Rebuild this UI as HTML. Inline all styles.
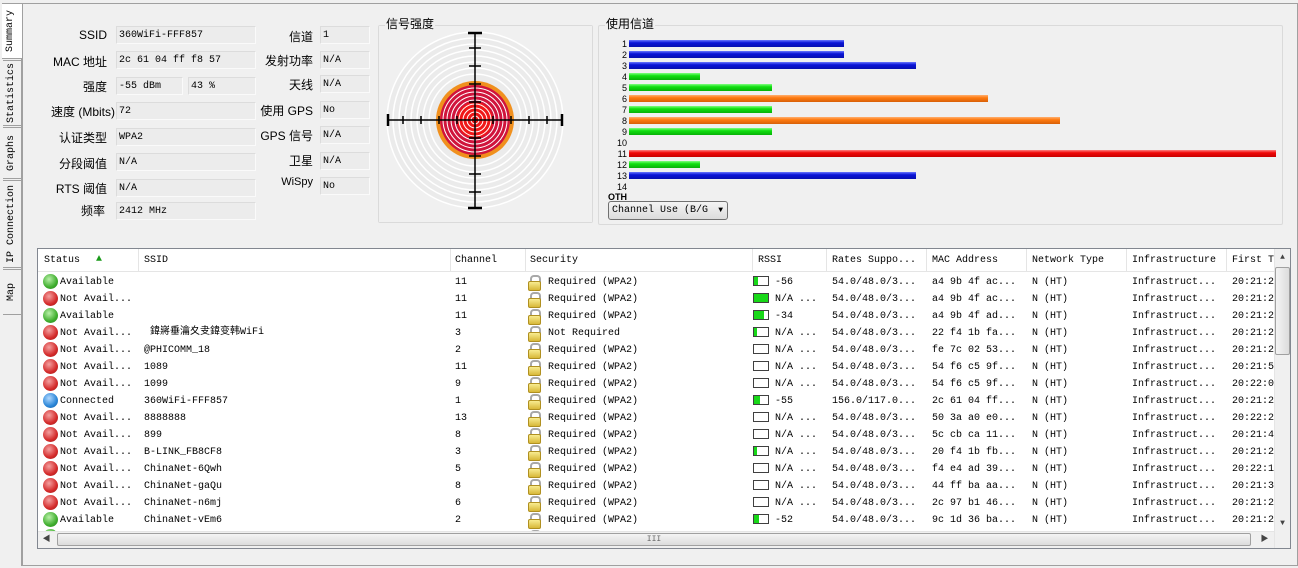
<!DOCTYPE html>
<html><head><meta charset="utf-8"><style>
*{margin:0;padding:0;box-sizing:border-box}
body{width:1298px;height:568px;background:#f0f0f0;font-family:"Liberation Mono","Noto Sans CJK SC",monospace;font-size:10px;color:#000;position:relative;overflow:hidden}
.a{position:absolute}
.frame{left:22px;top:3px;width:1276px;height:563px;border:1px solid #a0a0a0;border-left:1px solid #a0a0a0}
.tab{position:absolute;left:3px;width:19px;border:1px solid #a0a0a0;border-right:none;background:#f0f0f0;writing-mode:vertical-rl;transform:rotate(180deg);text-align:center;font-size:10px;line-height:17px}
.lbl{position:absolute;text-align:right;font-family:"Liberation Sans","Noto Sans CJK SC",sans-serif;font-size:12px;white-space:nowrap}
.fld{position:absolute;height:18px;background:#ececec;border:1px solid #dcdcdc;border-bottom-color:#fafafa;border-right-color:#fafafa;padding-left:2px;padding-top:2px;line-height:14px;font-size:10px;white-space:nowrap}
.grp{position:absolute;border:1px solid #dadada;border-radius:2px}
.gt{position:absolute;z-index:5;font-family:"Liberation Sans","Noto Sans CJK SC",sans-serif;font-size:12px;background:#f0f0f0;padding:0 1px;line-height:16px}
.bar{position:absolute;left:629px;height:7px}
.cn{position:absolute;width:30px;left:597px;text-align:right;font-family:"Liberation Sans",sans-serif;font-size:9px;line-height:10px}
.tbl{left:37px;top:248px;width:1254px;height:301px;border:1px solid #828790;background:#fff;overflow:hidden}
.hd{position:absolute;top:0;left:0;width:1236px;height:23px;background:#fff;border-bottom:1px solid #e5e5e5}
.hd span{position:absolute;top:6px;white-space:nowrap}
.sep{position:absolute;top:0;width:1px;height:22px;background:#e5e5e5}
.r{position:absolute;left:0;height:17px;width:1236px;white-space:nowrap}
.r span{position:absolute;top:4px;line-height:11px}
.dot{position:absolute;left:5px;top:1px;width:15px;height:15px;border-radius:50%}
.g{background:radial-gradient(circle at 40% 35%,#b8f0a8,#3fae2e 60%,#2a7e20)}
.rd{background:radial-gradient(circle at 40% 35%,#f4a0a0,#d42a2a 60%,#9a1a1a)}
.bl{background:radial-gradient(circle at 40% 35%,#b0d8ff,#2a86d8 60%,#1a5a9a)}
.lk{position:absolute;left:490px;top:2px;width:11px;height:14px}
.lk:before{content:"";position:absolute;left:2px;top:0;width:7px;height:7px;border:2px solid #a8a8a8;border-bottom:none;border-radius:4px 4px 0 0}
.lk:after{content:"";position:absolute;left:0;top:6px;width:11px;height:8px;background:linear-gradient(#f8ec90,#d8b838);border:1px solid #b09020;border-radius:2px}
.rs{position:absolute;left:715px;top:3px;width:16px;height:10px;border:1px solid #404040;background:#fff}
.rs i{display:block;height:100%;background:#18d818}
</style></head><body>
<div class="a frame"></div>
<div class="a" style="left:21px;top:3px;width:1px;height:563px;background:#a0a0a0"></div>
<div class="tab" style="top:3px;height:56px;background:#fff;left:2px;width:21px;border-right:none">Summary</div>
<div class="tab" style="top:60px;height:66px">Statistics</div>
<div class="tab" style="top:127px;height:52px">Graphs</div>
<div class="tab" style="top:180px;height:88px">IP Connection</div>
<div class="tab" style="top:269px;height:46px">Map</div>

<div class="lbl" style="right:1191px;top:28px">SSID</div>
<div class="lbl" style="right:1191px;top:53px">MAC 地址</div>
<div class="lbl" style="right:1191px;top:78px">强度</div>
<div class="lbl" style="right:1183px;top:103px">速度 (Mbits)</div>
<div class="lbl" style="right:1191px;top:129px">认证类型</div>
<div class="lbl" style="right:1191px;top:155px">分段阈值</div>
<div class="lbl" style="right:1191px;top:180px">RTS 阈值</div>
<div class="lbl" style="right:1193px;top:202px">频率</div>
<div class="fld" style="left:116px;top:26px;width:140px">360WiFi-FFF857</div>
<div class="fld" style="left:116px;top:51px;width:140px">2c 61 04 ff f8 57</div>
<div class="fld" style="left:116px;top:77px;width:67px">-55 dBm</div>
<div class="fld" style="left:188px;top:77px;width:68px">43 %</div>
<div class="fld" style="left:116px;top:102px;width:140px">72</div>
<div class="fld" style="left:116px;top:128px;width:140px">WPA2</div>
<div class="fld" style="left:116px;top:153px;width:140px">N/A</div>
<div class="fld" style="left:116px;top:179px;width:140px">N/A</div>
<div class="fld" style="left:116px;top:202px;width:140px">2412 MHz</div>

<div class="lbl" style="right:985px;top:28px">信道</div>
<div class="lbl" style="right:985px;top:52px">发射功率</div>
<div class="lbl" style="right:985px;top:76px">天线</div>
<div class="lbl" style="right:985px;top:102px">使用 GPS</div>
<div class="lbl" style="right:985px;top:127px">GPS 信号</div>
<div class="lbl" style="right:985px;top:152px">卫星</div>
<div class="lbl" style="right:985px;top:176px;font-size:11px">WiSpy</div>
<div class="fld" style="left:320px;top:26px;width:50px">1</div>
<div class="fld" style="left:320px;top:51px;width:50px">N/A</div>
<div class="fld" style="left:320px;top:75px;width:50px">N/A</div>
<div class="fld" style="left:320px;top:101px;width:50px">No</div>
<div class="fld" style="left:320px;top:126px;width:50px">N/A</div>
<div class="fld" style="left:320px;top:152px;width:50px">N/A</div>
<div class="fld" style="left:320px;top:177px;width:50px">No</div>

<div class="grp" style="left:378px;top:25px;width:215px;height:198px"></div>
<svg class="a" style="left:378px;top:25px" width="215" height="198">
<rect x="1" y="1" width="213" height="196" fill="#f0f0f0"/>
<g fill="none" stroke="#fff" stroke-width="1.5">
<circle cx="97" cy="95" r="88" fill="#ebebeb"/>
<circle cx="97" cy="95" r="82"/><circle cx="97" cy="95" r="76"/><circle cx="97" cy="95" r="70"/><circle cx="97" cy="95" r="64"/><circle cx="97" cy="95" r="58"/><circle cx="97" cy="95" r="52"/><circle cx="97" cy="95" r="46"/>
</g>
<circle cx="97" cy="95" r="39" fill="#f0901e"/>
<circle cx="97" cy="95" r="35" fill="#d0143c"/>
<circle cx="97" cy="95" r="18" fill="#f01818"/>
<g fill="none" stroke="#fff" stroke-width="1">
<circle cx="97" cy="95" r="32"/><circle cx="97" cy="95" r="28"/><circle cx="97" cy="95" r="24"/><circle cx="97" cy="95" r="20"/><circle cx="97" cy="95" r="16"/><circle cx="97" cy="95" r="12"/><circle cx="97" cy="95" r="8"/><circle cx="97" cy="95" r="4"/>
</g>
<g stroke="#000" stroke-width="1.5">
<line x1="9" y1="95" x2="185" y2="95"/><line x1="97" y1="7" x2="97" y2="184"/>
<line x1="10" y1="89" x2="10" y2="101" stroke-width="2.5"/><line x1="184" y1="89" x2="184" y2="101" stroke-width="2.5"/>
<line x1="90" y1="8" x2="104" y2="8" stroke-width="2.5"/><line x1="90" y1="183" x2="104" y2="183" stroke-width="2.5"/>
<line x1="25" y1="91" x2="25" y2="99"/><line x1="43" y1="91" x2="43" y2="99"/><line x1="61" y1="91" x2="61" y2="99"/><line x1="79" y1="91" x2="79" y2="99"/>
<line x1="115" y1="91" x2="115" y2="99"/><line x1="133" y1="91" x2="133" y2="99"/><line x1="151" y1="91" x2="151" y2="99"/><line x1="169" y1="91" x2="169" y2="99"/>
<line x1="91" y1="23" x2="103" y2="23"/><line x1="91" y1="41" x2="103" y2="41"/><line x1="91" y1="59" x2="103" y2="59"/><line x1="91" y1="77" x2="103" y2="77"/>
<line x1="91" y1="113" x2="103" y2="113"/><line x1="91" y1="131" x2="103" y2="131"/><line x1="91" y1="149" x2="103" y2="149"/><line x1="91" y1="167" x2="103" y2="167"/>
</g>
</svg>
<div class="gt" style="left:385px;top:16px">信号强度</div>

<div class="grp" style="left:598px;top:25px;width:685px;height:200px"></div>
<div class="gt" style="left:605px;top:16px">使用信道</div>
<div class="cn" style="top:39px">1</div><div class="bar" style="top:40px;width:215px;background:linear-gradient(#6a78ff,#0a14d8 40%,#0810b0)"></div>
<div class="cn" style="top:50px">2</div><div class="bar" style="top:51px;width:215px;background:linear-gradient(#6a78ff,#0a14d8 40%,#0810b0)"></div>
<div class="cn" style="top:61px">3</div><div class="bar" style="top:62px;width:287px;background:linear-gradient(#6a78ff,#0a14d8 40%,#0810b0)"></div>
<div class="cn" style="top:72px">4</div><div class="bar" style="top:73px;width:71px;background:linear-gradient(#80ff80,#10e010 40%,#08b008)"></div>
<div class="cn" style="top:83px">5</div><div class="bar" style="top:84px;width:143px;background:linear-gradient(#80ff80,#10e010 40%,#08b008)"></div>
<div class="cn" style="top:94px">6</div><div class="bar" style="top:95px;width:359px;background:linear-gradient(#ffb070,#ff7a10 40%,#d86008)"></div>
<div class="cn" style="top:105px">7</div><div class="bar" style="top:106px;width:143px;background:linear-gradient(#80ff80,#10e010 40%,#08b008)"></div>
<div class="cn" style="top:116px">8</div><div class="bar" style="top:117px;width:431px;background:linear-gradient(#ffb070,#ff7a10 40%,#d86008)"></div>
<div class="cn" style="top:127px">9</div><div class="bar" style="top:128px;width:143px;background:linear-gradient(#80ff80,#10e010 40%,#08b008)"></div>
<div class="cn" style="top:138px">10</div>
<div class="cn" style="top:149px">11</div><div class="bar" style="top:150px;width:647px;background:linear-gradient(#ff8080,#f00808 40%,#c80000)"></div>
<div class="cn" style="top:160px">12</div><div class="bar" style="top:161px;width:71px;background:linear-gradient(#80ff80,#10e010 40%,#08b008)"></div>
<div class="cn" style="top:171px">13</div><div class="bar" style="top:172px;width:287px;background:linear-gradient(#6a78ff,#0a14d8 40%,#0810b0)"></div>
<div class="cn" style="top:182px">14</div>
<div class="a" style="left:608px;top:192px;font-family:'Liberation Sans',sans-serif;font-size:9px;font-weight:bold">OTH</div>
<div class="a" style="left:608px;top:201px;width:120px;height:19px;border:1px solid #707070;border-radius:3px;background:linear-gradient(#f4f4f4,#dcdcdc);padding-left:3px;line-height:17px;font-size:10px">Channel Use (B/G <span style="position:absolute;right:4px;top:0;font-size:8px">▼</span></div>

<div class="a tbl">
<div class="hd">
<span style="left:6px">Status</span><span style="left:58px;top:5px;color:#1a9a1a;font-size:10px">▲</span><span style="left:106px">SSID</span><span style="left:417px">Channel</span><span style="left:492px">Security</span><span style="left:720px">RSSI</span><span style="left:794px">Rates Suppo...</span><span style="left:894px">MAC Address</span><span style="left:994px">Network Type</span><span style="left:1094px">Infrastructure</span><span style="left:1194px">First T</span>
<div class="sep" style="left:100px"></div><div class="sep" style="left:412px"></div><div class="sep" style="left:487px"></div><div class="sep" style="left:714px"></div><div class="sep" style="left:788px"></div><div class="sep" style="left:888px"></div><div class="sep" style="left:988px"></div><div class="sep" style="left:1088px"></div><div class="sep" style="left:1188px"></div>
</div>

<div class="r" style="top:24px"><div class="dot g"></div><span style="left:22px">Available</span><span style="left:417px">11</span><div class="lk"></div><span style="left:510px">Required (WPA2)</span><div class="rs"><i style="width:30%"></i></div><span style="left:737px">-56</span><span style="left:794px">54.0/48.0/3...</span><span style="left:894px">a4 9b 4f ac...</span><span style="left:994px">N (HT)</span><span style="left:1094px">Infrastruct...</span><span style="left:1194px">20:21:2</span></div>
<div class="r" style="top:41px"><div class="dot rd"></div><span style="left:22px">Not Avail...</span><span style="left:417px">11</span><div class="lk"></div><span style="left:510px">Required (WPA2)</span><div class="rs"><i style="width:100%"></i></div><span style="left:737px">N/A ...</span><span style="left:794px">54.0/48.0/3...</span><span style="left:894px">a4 9b 4f ac...</span><span style="left:994px">N (HT)</span><span style="left:1094px">Infrastruct...</span><span style="left:1194px">20:21:2</span></div>
<div class="r" style="top:58px"><div class="dot g"></div><span style="left:22px">Available</span><span style="left:417px">11</span><div class="lk"></div><span style="left:510px">Required (WPA2)</span><div class="rs"><i style="width:70%"></i></div><span style="left:737px">-34</span><span style="left:794px">54.0/48.0/3...</span><span style="left:894px">a4 9b 4f ad...</span><span style="left:994px">N (HT)</span><span style="left:1094px">Infrastruct...</span><span style="left:1194px">20:21:2</span></div>
<div class="r" style="top:75px"><div class="dot rd"></div><span style="left:22px">Not Avail...</span><span style="left:112px;top:2px;line-height:13px">鍏嶈垂瀹夊叏鍏变韩WiFi</span><span style="left:417px">3</span><div class="lk"></div><span style="left:510px">Not Required</span><div class="rs"><i style="width:20%"></i></div><span style="left:737px">N/A ...</span><span style="left:794px">54.0/48.0/3...</span><span style="left:894px">22 f4 1b fa...</span><span style="left:994px">N (HT)</span><span style="left:1094px">Infrastruct...</span><span style="left:1194px">20:21:2</span></div>
<div class="r" style="top:92px"><div class="dot rd"></div><span style="left:22px">Not Avail...</span><span style="left:106px">@PHICOMM_18</span><span style="left:417px">2</span><div class="lk"></div><span style="left:510px">Required (WPA2)</span><div class="rs"></div><span style="left:737px">N/A ...</span><span style="left:794px">54.0/48.0/3...</span><span style="left:894px">fe 7c 02 53...</span><span style="left:994px">N (HT)</span><span style="left:1094px">Infrastruct...</span><span style="left:1194px">20:21:2</span></div>
<div class="r" style="top:109px"><div class="dot rd"></div><span style="left:22px">Not Avail...</span><span style="left:106px">1089</span><span style="left:417px">11</span><div class="lk"></div><span style="left:510px">Required (WPA2)</span><div class="rs"></div><span style="left:737px">N/A ...</span><span style="left:794px">54.0/48.0/3...</span><span style="left:894px">54 f6 c5 9f...</span><span style="left:994px">N (HT)</span><span style="left:1094px">Infrastruct...</span><span style="left:1194px">20:21:5</span></div>
<div class="r" style="top:126px"><div class="dot rd"></div><span style="left:22px">Not Avail...</span><span style="left:106px">1099</span><span style="left:417px">9</span><div class="lk"></div><span style="left:510px">Required (WPA2)</span><div class="rs"></div><span style="left:737px">N/A ...</span><span style="left:794px">54.0/48.0/3...</span><span style="left:894px">54 f6 c5 9f...</span><span style="left:994px">N (HT)</span><span style="left:1094px">Infrastruct...</span><span style="left:1194px">20:22:0</span></div>
<div class="r" style="top:143px"><div class="dot bl"></div><span style="left:22px">Connected</span><span style="left:106px">360WiFi-FFF857</span><span style="left:417px">1</span><div class="lk"></div><span style="left:510px">Required (WPA2)</span><div class="rs"><i style="width:40%"></i></div><span style="left:737px">-55</span><span style="left:794px">156.0/117.0...</span><span style="left:894px">2c 61 04 ff...</span><span style="left:994px">N (HT)</span><span style="left:1094px">Infrastruct...</span><span style="left:1194px">20:21:2</span></div>
<div class="r" style="top:160px"><div class="dot rd"></div><span style="left:22px">Not Avail...</span><span style="left:106px">8888888</span><span style="left:417px">13</span><div class="lk"></div><span style="left:510px">Required (WPA2)</span><div class="rs"></div><span style="left:737px">N/A ...</span><span style="left:794px">54.0/48.0/3...</span><span style="left:894px">50 3a a0 e0...</span><span style="left:994px">N (HT)</span><span style="left:1094px">Infrastruct...</span><span style="left:1194px">20:22:2</span></div>
<div class="r" style="top:177px"><div class="dot rd"></div><span style="left:22px">Not Avail...</span><span style="left:106px">899</span><span style="left:417px">8</span><div class="lk"></div><span style="left:510px">Required (WPA2)</span><div class="rs"></div><span style="left:737px">N/A ...</span><span style="left:794px">54.0/48.0/3...</span><span style="left:894px">5c cb ca 11...</span><span style="left:994px">N (HT)</span><span style="left:1094px">Infrastruct...</span><span style="left:1194px">20:21:4</span></div>
<div class="r" style="top:194px"><div class="dot rd"></div><span style="left:22px">Not Avail...</span><span style="left:106px">B-LINK_FB8CF8</span><span style="left:417px">3</span><div class="lk"></div><span style="left:510px">Required (WPA2)</span><div class="rs"><i style="width:20%"></i></div><span style="left:737px">N/A ...</span><span style="left:794px">54.0/48.0/3...</span><span style="left:894px">20 f4 1b fb...</span><span style="left:994px">N (HT)</span><span style="left:1094px">Infrastruct...</span><span style="left:1194px">20:21:2</span></div>
<div class="r" style="top:211px"><div class="dot rd"></div><span style="left:22px">Not Avail...</span><span style="left:106px">ChinaNet-6Qwh</span><span style="left:417px">5</span><div class="lk"></div><span style="left:510px">Required (WPA2)</span><div class="rs"></div><span style="left:737px">N/A ...</span><span style="left:794px">54.0/48.0/3...</span><span style="left:894px">f4 e4 ad 39...</span><span style="left:994px">N (HT)</span><span style="left:1094px">Infrastruct...</span><span style="left:1194px">20:22:1</span></div>
<div class="r" style="top:228px"><div class="dot rd"></div><span style="left:22px">Not Avail...</span><span style="left:106px">ChinaNet-gaQu</span><span style="left:417px">8</span><div class="lk"></div><span style="left:510px">Required (WPA2)</span><div class="rs"></div><span style="left:737px">N/A ...</span><span style="left:794px">54.0/48.0/3...</span><span style="left:894px">44 ff ba aa...</span><span style="left:994px">N (HT)</span><span style="left:1094px">Infrastruct...</span><span style="left:1194px">20:21:3</span></div>
<div class="r" style="top:245px"><div class="dot rd"></div><span style="left:22px">Not Avail...</span><span style="left:106px">ChinaNet-n6mj</span><span style="left:417px">6</span><div class="lk"></div><span style="left:510px">Required (WPA2)</span><div class="rs"></div><span style="left:737px">N/A ...</span><span style="left:794px">54.0/48.0/3...</span><span style="left:894px">2c 97 b1 46...</span><span style="left:994px">N (HT)</span><span style="left:1094px">Infrastruct...</span><span style="left:1194px">20:21:2</span></div>
<div class="r" style="top:262px"><div class="dot g"></div><span style="left:22px">Available</span><span style="left:106px">ChinaNet-vEm6</span><span style="left:417px">2</span><div class="lk"></div><span style="left:510px">Required (WPA2)</span><div class="rs"><i style="width:35%"></i></div><span style="left:737px">-52</span><span style="left:794px">54.0/48.0/3...</span><span style="left:894px">9c 1d 36 ba...</span><span style="left:994px">N (HT)</span><span style="left:1094px">Infrastruct...</span><span style="left:1194px">20:21:2</span></div>
<div class="r" style="top:279px"><div class="dot g"></div><div class="lk"></div><div class="rs"></div></div>

<div class="a" style="left:1236px;top:0;width:17px;height:299px;background:#f0f0f0;border-left:1px solid #e5e5e5"></div>
<div class="a" style="left:1236px;top:0;width:17px;height:17px;text-align:center;font-size:8px;line-height:17px;color:#444">▲</div>
<div class="a" style="left:1237px;top:18px;width:15px;height:88px;border:1px solid #a0a0a0;border-radius:2px;background:linear-gradient(90deg,#f4f4f4,#dcdcdc)"></div>
<div class="a" style="left:1236px;top:266px;width:17px;height:17px;text-align:center;font-size:8px;line-height:17px;color:#444">▼</div>
<div class="a" style="left:0;top:282px;width:1236px;height:17px;background:#f0f0f0;border-top:1px solid #e5e5e5"></div>
<div class="a" style="left:0;top:282px;width:17px;height:17px;text-align:center;font-size:8px;line-height:17px;color:#444">◀</div>
<div class="a" style="left:19px;top:284px;width:1194px;height:13px;border:1px solid #a0a0a0;border-radius:2px;background:linear-gradient(#f4f4f4,#dcdcdc);text-align:center;font-size:8px;line-height:11px;color:#666">III</div>
<div class="a" style="left:1218px;top:282px;width:17px;height:17px;text-align:center;font-size:8px;line-height:17px;color:#444">▶</div>
</div>
</body></html>
